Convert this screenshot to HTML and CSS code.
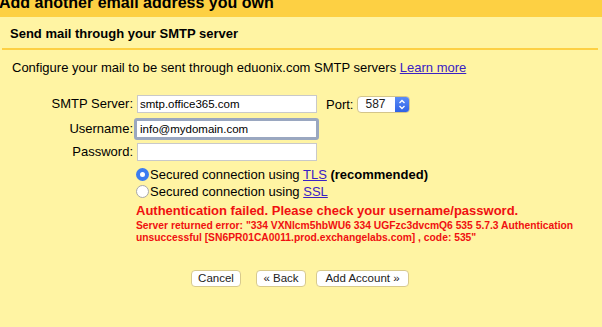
FILE: index.html
```html
<!DOCTYPE html>
<html lang="en">
  <head>
    <meta charset="UTF-8" />
    <title>Add another email address you own</title>
    <link rel="stylesheet" href="styles.css">
  </head>
  <body>
    <header class="title-bar">
      <h1>Add another email address you own</h1>
    </header>

    <div class="panel">
      <h2 class="section-title">Send mail through your SMTP server</h2>

      <p class="intro">
        Configure your mail to be sent through eduonix.com SMTP servers
        <a href="#">Learn more</a>
      </p>

      <div class="form">
        <label class="label" for="smtp">SMTP Server:</label>
        <div class="field">
          <input id="smtp" class="text" type="text" value="smtp.office365.com" />
          <span class="port-label">Port:</span>
          <div class="port">
            <span class="port-value">587</span>
            <span class="port-arrows">
              <svg width="8" height="11" viewBox="0 0 8 11">
                <path d="M1.5 4 L4 1.5 L6.5 4 M1.5 7 L4 9.5 L6.5 7" fill="none" stroke="#fff" stroke-width="1.3" />
              </svg>
            </span>
          </div>
        </div>

        <label class="label" for="user">Username:</label>
        <div class="field">
          <input id="user" class="text focused" type="text" value="info@mydomain.com" />
        </div>

        <label class="label" for="pass">Password:</label>
        <div class="field">
          <input id="pass" class="text" type="password" value="" />
        </div>

        <div></div>
        <div class="options">
          <div class="radio-row">
            <span class="radio checked"></span><span>Secured connection using <a href="#">TLS</a> <b>(recommended)</b></span>
          </div>
          <div class="radio-row">
            <span class="radio"></span><span>Secured connection using <a href="#">SSL</a></span>
          </div>
          <div class="error">Authentication failed. Please check your username/password.</div>
          <div class="error-detail">
            Server returned error: "334 VXNlcm5hbWU6 334 UGFzc3dvcmQ6 535 5.7.3 Authentication<br />
            unsuccessful [SN6PR01CA0011.prod.exchangelabs.com] , code: 535"
          </div>
        </div>
      </div>

      <div class="buttons">
        <button class="cancel">Cancel</button>
        <button class="back">« Back</button>
        <button class="add">Add Account »</button>
      </div>
    </div>
  </body>
</html>
```

FILE: styles.css
```css
body {
  margin: 0;
  padding: 0;
  font-family: "Liberation Sans", Arial, sans-serif;
  background-color: #fff4a3;
  color: #000;
  overflow: hidden;
}

.title-bar {
  background-color: #fdd043;
  height: 17px;
  overflow: hidden;
}

.title-bar h1 {
  margin: -6px 0 0 -1px;
  font-size: 16px;
  font-weight: bold;
  line-height: 17px;
  white-space: nowrap;
}

.panel {
  padding: 0 4px 0 2px;
}

.section-title {
  margin: 0;
  padding: 9px 0 0 8px;
  height: 22px;
  font-size: 13px;
  font-weight: bold;
  line-height: 15px;
  border-bottom: 2px solid #fdd043;
}

.intro {
  margin: 10px 0 0 10px;
  font-size: 13px;
  line-height: 16px;
}

a {
  color: #3a21c4;
}

.form {
  display: grid;
  grid-template-columns: 131px auto;
  grid-template-rows: 24px 26px 20px auto;
  column-gap: 4px;
  margin-top: 16px;
  font-size: 13px;
}

.label {
  display: flex;
  align-items: center;
  justify-content: flex-end;
  line-height: 16px;
}

.field {
  display: flex;
  align-items: center;
}

.text {
  box-sizing: border-box;
  width: 180px;
  height: 18px;
  margin: 0;
  padding: 0 2px;
  border: 1px solid #c9c9c9;
  background: #fff;
  font-family: "Liberation Sans", Arial, sans-serif;
  font-size: 11.5px;
  color: #000;
  outline: none;
}

.text.focused {
  width: 185px;
  height: 22px;
  margin-left: -3px;
  padding-left: 3px;
  border: 3px solid #9aa7c0;
  border-radius: 3px;
}

.port-label {
  margin-left: 9px;
  font-size: 13px;
}

.port {
  display: flex;
  margin-left: 4px;
  height: 17px;
  width: 53px;
  border: 1px solid #d4c58a;
  border-radius: 4px;
  background: #fff;
  overflow: hidden;
  box-sizing: border-box;
}

.port-value {
  flex: 1;
  padding-left: 7px;
  font-size: 12px;
  line-height: 15px;
  color: #222;
}

.port-arrows {
  display: flex;
  align-items: center;
  justify-content: center;
  width: 14px;
  background: linear-gradient(#5a8cf7, #2f62e6);
}

.options {
  padding-top: 4px;
  margin-left: -1px;
}

.radio-row {
  display: flex;
  align-items: center;
  height: 17px;
  font-size: 13px;
  white-space: nowrap;
}

.radio {
  box-sizing: border-box;
  width: 13px;
  height: 13px;
  margin-right: 1px;
  border-radius: 50%;
  border: 1px solid #a8a8a8;
  background: #fff;
}

.radio.checked {
  border: 4px solid #3c7cf0;
  background: #fff;
}

.error {
  margin-top: 3px;
  color: #f01010;
  font-size: 13px;
  font-weight: bold;
  line-height: 16px;
}

.error-detail {
  margin-top: 1px;
  color: #f01010;
  font-size: 10.3px;
  font-weight: bold;
  line-height: 12px;
}

.buttons {
  display: flex;
  gap: 10px;
  margin: 26px 0 0 189px;
}

button {
  box-sizing: border-box;
  height: 17px;
  padding: 0;
  text-align: center;
  background: #fff;
  border: 1px solid #d8ca8c;
  border-radius: 4px;
  font-family: "Liberation Sans", Arial, sans-serif;
  font-size: 11.5px;
  color: #222;
  line-height: 15px;
}

button.cancel {
  width: 50px;
  margin-right: 5px;
}

button.back {
  width: 50px;
}

button.add {
  width: 93px;
}
```
